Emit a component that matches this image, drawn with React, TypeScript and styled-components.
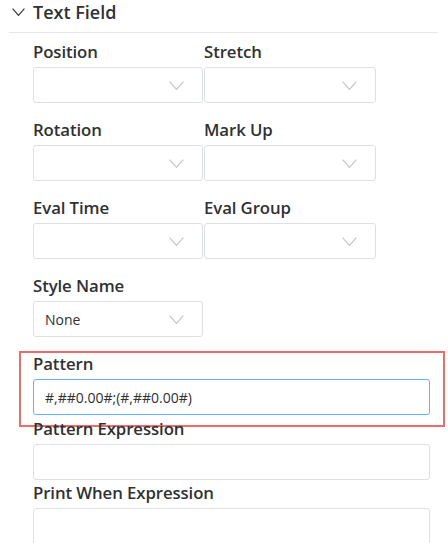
import React from "react";
import styled, { createGlobalStyle } from "styled-components";

const Global = createGlobalStyle`
  html, body { margin: 0; padding: 0; background: #ffffff; }
  body { font-family: "Open Sans", "Noto Sans", sans-serif; color: #303133; }
  * { box-sizing: border-box; }
`;

const Panel = styled.div`
  width: 448px;
  height: 543px;
  overflow: hidden;
  background: #fff;
`;

const Header = styled.div`
  display: flex;
  align-items: center;
  gap: 8px;
  height: 33px;
  margin: 0 10px 0 9px;
  padding: 0 0 9px 3px;
  border-bottom: 1px solid #e4e7ed;
  font-size: 18px;
  font-weight: 600;
  color: #303133;
  line-height: 22px;
`;

const Body = styled.div`
  padding: 9px 0 0 33px;
`;

const Row = styled.div`
  display: grid;
  grid-template-columns: 171px 172px;
`;

const Field = styled.div<{ $gap?: number }>`
  position: relative;
  margin-bottom: ${(p) => p.$gap ?? 17}px;
`;

const Highlight = styled(Field)`
  &::before {
    content: "";
    position: absolute;
    left: -14px;
    top: -3px;
    width: 422px;
    height: 72px;
    border: 2px solid #f06a6a;
    pointer-events: none;
  }
`;

const Label = styled.div`
  height: 20px;
  line-height: 20px;
  margin-bottom: 5px;
  font-size: 16.8px;
  font-weight: 600;
  color: #303133;
  white-space: nowrap;
  letter-spacing: -0.1px;
`;

const SelectBox = styled.div<{ $w: number }>`
  display: flex;
  align-items: center;
  justify-content: space-between;
  width: ${(p) => p.$w}px;
  height: 36px;
  padding: 0 18px 0 11px;
  border: 1px solid #dcdfe6;
  border-radius: 3px;
  font-size: 14px;
  color: #303133;
  background: #fff;
`;

const Input = styled.div<{ $focus?: boolean; $h?: number }>`
  display: flex;
  align-items: center;
  width: 397px;
  height: ${(p) => p.$h ?? 36}px;
  padding: 0 11px;
  border: 1px solid ${(p) => (p.$focus ? "#66b1ff" : "#dcdfe6")};
  border-radius: 3px;
  font-size: 14px;
  color: #303133;
  background: #fff;
`;

const Chevron = ({ w = 15, h = 9, color = "#c0c4cc" }: { w?: number; h?: number; color?: string }) => (
  <svg width={w} height={h} viewBox={`0 0 ${w} ${h}`} fill="none">
    <path d={`M0.6 0.6 L${w / 2} ${h - 0.6} L${w - 0.6} 0.6`} stroke={color} strokeWidth="1.1" />
  </svg>
);

const Select = ({ w, value }: { w: number; value?: string }) => (
  <SelectBox $w={w}>
    <span>{value ?? ""}</span>
    <Chevron />
  </SelectBox>
);

export default function App() {
  return (
    <Panel>
      <Global />
      <Header>
        <Chevron w={13} h={8} color="#303133" />
        <span>Text Field</span>
      </Header>
      <Body>
        <Row>
          <Field>
            <Label>Position</Label>
            <Select w={170} />
          </Field>
          <Field>
            <Label>Stretch</Label>
            <Select w={172} />
          </Field>
        </Row>
        <Row>
          <Field>
            <Label>Rotation</Label>
            <Select w={170} />
          </Field>
          <Field>
            <Label>Mark Up</Label>
            <Select w={172} />
          </Field>
        </Row>
        <Row>
          <Field>
            <Label>Eval Time</Label>
            <Select w={170} />
          </Field>
          <Field>
            <Label>Eval Group</Label>
            <Select w={172} />
          </Field>
        </Row>
        <Field>
          <Label>Style Name</Label>
          <Select w={170} value="None" />
        </Field>
        <Highlight $gap={4}>
          <Label>Pattern</Label>
          <Input $focus>#,##0.00#;(#,##0.00#)</Input>
        </Highlight>
        <Field $gap={3}>
          <Label>Pattern Expression</Label>
          <Input />
        </Field>
        <Field>
          <Label>Print When Expression</Label>
          <Input $h={60} />
        </Field>
      </Body>
    </Panel>
  );
}
